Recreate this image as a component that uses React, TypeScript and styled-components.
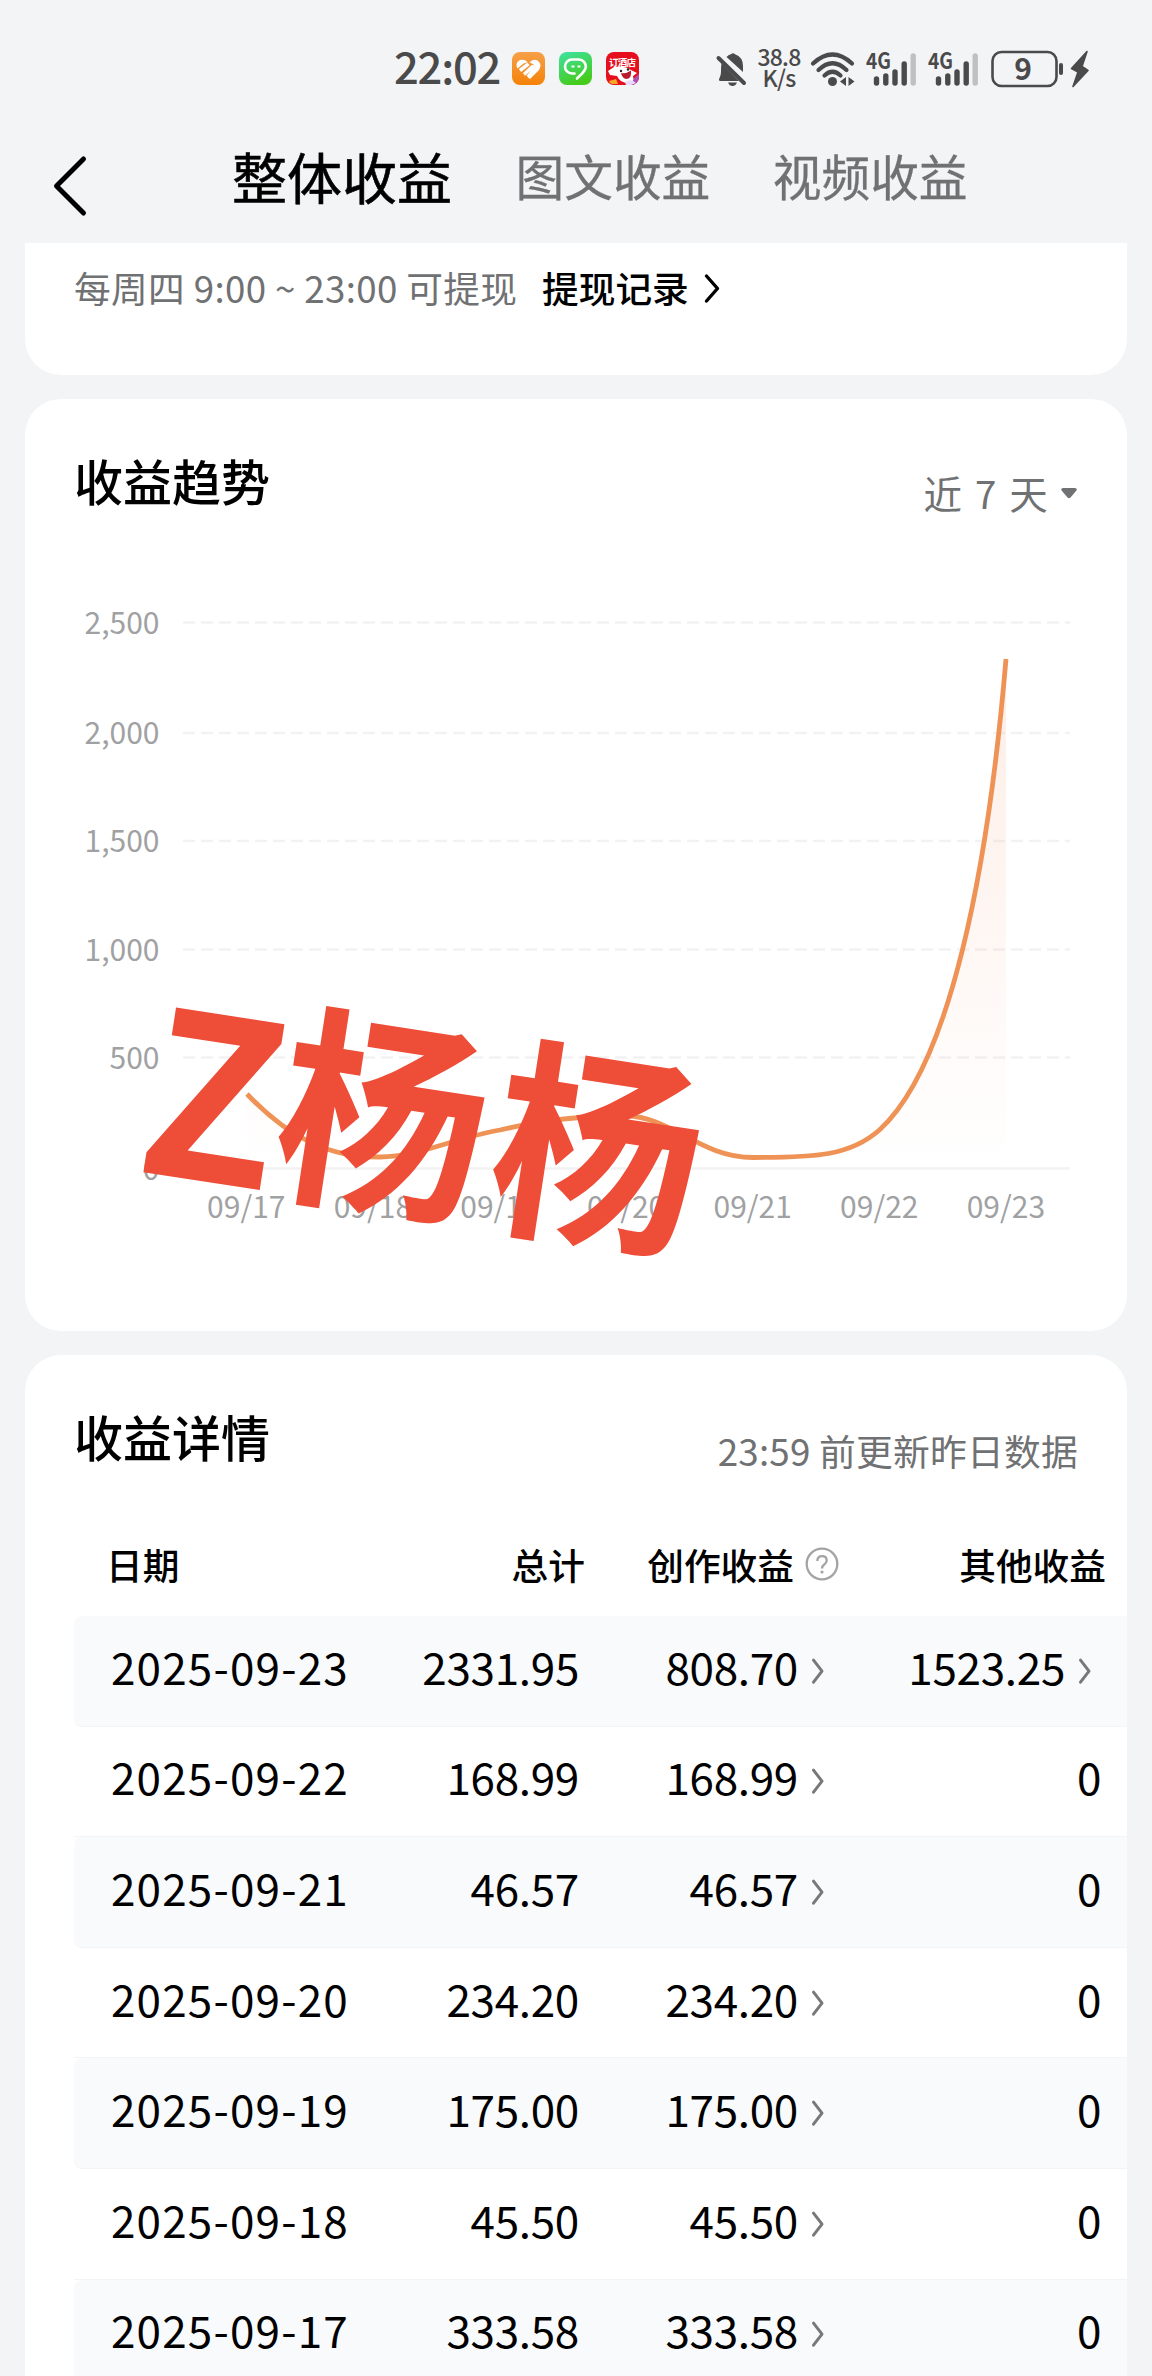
import React from 'react';
import styled, { createGlobalStyle } from 'styled-components';

const GlobalStyle = createGlobalStyle`
  *, *::before, *::after { box-sizing: border-box; }
  body {
    margin: 0;
    background: #f3f4f6;
    font-family: "Noto Sans CJK SC", "Noto Sans", sans-serif;
    color: #000;
  }
  svg { display: block; flex: none; overflow: visible; }
`;

const Screen = styled.div`
  width: 1152px;
  height: 2376px;
  overflow: hidden;
  display: flex;
  flex-direction: column;
`;

const StatusBar = styled.div`
  height: 137px;
  padding-left: 394px;
  display: flex;
  align-items: center;
  color: #4a4a4b;
  flex: none;
`;

const Clock = styled.span`
  width: 118px;
  font-size: 43.5px;
  line-height: 60px;
  letter-spacing: -1.2px;
  font-weight: 500;
  margin-top: -6px;
`;

const AppIcons = styled.div`
  display: flex;
  gap: 14px;
  width: 204px;
`;

const Speed = styled.div`
  width: 52px;
  margin: -3px 5px 0 5px;
  display: flex;
  flex-direction: column;
  align-items: center;
  font-size: 23px;
  line-height: 21.5px;
  letter-spacing: -0.8px;
  font-weight: 500;
`;

const Signals = styled.div`
  display: flex;
  gap: 10px;
  margin-left: 10px;
`;

const Battery = styled.div`
  display: flex;
  align-items: center;
  margin-left: 11px;
`;

const Header = styled.header`
  height: 106px;
  display: flex;
  align-items: flex-start;
  padding-left: 50px;
  flex: none;
`;

const BackIcon = styled.svg`
  margin-top: 14px;
`;

const Tabs = styled.nav`
  display: flex;
  margin-left: 142px;
  height: 76px;
  align-items: center;
`;

const Tab = styled.span<{ $active?: boolean }>`
  font-size: ${p => (p.$active ? 55 : 48.7)}px;
  color: ${p => (p.$active ? '#000' : '#707173')};
  -webkit-text-stroke: ${p => (p.$active ? 0.6 : 0.3)}px currentColor;
  line-height: 72px;
  margin-right: ${p => (p.$active ? 63.5 : 62.5)}px;
  white-space: nowrap;
`;

const Card = styled.section<{ $height?: number; $shape?: 'top' | 'bottom' }>`
  margin: ${p => (p.$shape === 'top' ? 0 : 24)}px 25px 0;
  background: #fff;
  border-radius: ${p =>
    p.$shape === 'top' ? '0 0 36px 36px' : p.$shape === 'bottom' ? '36px 36px 0 0' : '36px'};
  ${p => (p.$height ? `height: ${p.$height}px;` : 'flex: 1;')}
  flex-shrink: 0;
  overflow: hidden;
  position: relative;
`;

const WithdrawRow = styled.div`
  display: flex;
  align-items: center;
  padding: 19px 0 0 49px;
  font-size: 36.7px;
  line-height: 50px;
  color: #707173;
  white-space: nowrap;
`;

const WithdrawTime = styled.span`
  width: 468px;
  letter-spacing: 0.35px;
`;

const RecordLink = styled.span`
  font-weight: 500;
  color: #000;
  margin-right: 15px;
`;

const CardHead = styled.div`
  display: flex;
  justify-content: space-between;
  padding: 46px 49px 0 49px;
`;

const Title = styled.h2`
  margin: 0;
  font-size: 49px;
  line-height: 70px;
  font-weight: 500;
`;

const HeadNote = styled.div<{ $size: number; $gap?: number }>`
  display: flex;
  align-items: center;
  height: 50px;
  margin-top: ${p => (p.$gap ? 22 : 24)}px;
  gap: ${p => p.$gap ?? 0}px;
  font-size: ${p => p.$size}px;
  line-height: 50px;
  letter-spacing: 0.2px;
  word-spacing: ${p => (p.$gap ? 4 : 0)}px;
  color: #707173;
`;

const ChartSvg = styled.svg`
  margin-top: 44px;
`;

const Watermark = styled.div`
  position: absolute;
  left: 125px;
  top: 514px;
  font-size: 210px;
  line-height: 300px;
  letter-spacing: 7px;
  font-weight: 700;
  color: #ee4d38;
  white-space: nowrap;
  transform: rotate(8.7deg) scaleY(1.02);
  transform-origin: 0 50%;
`;

const WatermarkInitial = styled.span`
  position: relative;
  top: 10px;
  font-size: 222px;
  letter-spacing: -3px;
`;

const Table = styled.div`
  margin: 36px 0 0 49px;
`;

const Row = styled.div<{ $shaded?: boolean }>`
  display: grid;
  grid-template-columns: 266px 246px 254px 267px;
  align-items: center;
  height: 110.6px;
  padding-bottom: 10px;
  font-size: 44px;
  letter-spacing: -0.3px;
  background: ${p => (p.$shaded ? '#f8fafc' : '#fff')};
  border-bottom: 1px solid #f3f4f6;
  border-radius: ${p => (p.$shaded ? '8px 0 0 8px' : '0')};
`;

const HeadRow = styled(Row)`
  height: 105px;
  padding-bottom: 0;
  border-bottom: 0;
  font-size: 36.7px;
  letter-spacing: 0;
  font-weight: 500;
`;

const Cell = styled.div<{ $end?: number; $start?: number; $gap?: number }>`
  display: flex;
  align-items: center;
  justify-content: ${p => (p.$start ? 'flex-start' : 'flex-end')};
  padding-left: ${p => p.$start ?? 0}px;
  padding-right: ${p => p.$end ?? 0}px;
  gap: ${p => p.$gap ?? 14}px;
  line-height: 64px;
  white-space: nowrap;
`;

const DateText = styled.span`
  letter-spacing: 1.2px;
`;

const Chevron = () => (
  <svg width="13" height="28" viewBox="0 0 13 28">
    <path d="M1.500 8.200 L10 19.200 L1.500 30.200" fill="none" stroke="#77787a" strokeWidth="3" strokeLinecap="round" strokeLinejoin="round" />
  </svg>
);

const Signal = () => (
  <svg width="52" height="36" viewBox="0 0 52 36">
    <text x="0" y="17.500" fontSize="22.500" fontWeight="700" fill="#4a4a4b" textLength="25" lengthAdjust="spacingAndGlyphs">4G</text>
    <g stroke="#4a4a4b" strokeWidth="5.400" strokeLinecap="round">
      <path d="M10.500 28V32" />
      <path d="M19.800 25V32" />
      <path d="M29 21V32" />
      <path d="M38.200 13V32" />
      <path d="M47.200 5V32" stroke="#bfc0c2" />
    </g>
  </svg>
);

const rows: [string, string, string, string][] = [
  ['2025-09-23', '2331.95', '808.70', '1523.25'],
  ['2025-09-22', '168.99', '168.99', '0'],
  ['2025-09-21', '46.57', '46.57', '0'],
  ['2025-09-20', '234.20', '234.20', '0'],
  ['2025-09-19', '175.00', '175.00', '0'],
  ['2025-09-18', '45.50', '45.50', '0'],
  ['2025-09-17', '333.58', '333.58', '0'],
];

const yTicks: [string, number][] = [
  ['2,500', 621.5],
  ['2,000', 732],
  ['1,500', 840],
  ['1,000', 948.5],
  ['500', 1056.5],
  ['0', 1167.5],
];

const days = ['09/17', '09/18', '09/19', '09/20', '09/21', '09/22', '09/23'];

const curve =
  'M247 1093 C290 1138 330 1156.5 380 1156 C420 1155.5 450 1138 500 1129 C530 1122 565 1115 626.6 1115 C670 1115 700 1156.5 753 1156.5 C815 1156.5 850 1155 879.4 1129 C950 1065 988 870 1006 658';

const TrendChart = () => (
  <ChartSvg width="1102" height="700" viewBox="25 560 1102 700">
    <defs>
      <linearGradient id="area" x1="0" y1="658" x2="0" y2="1167" gradientUnits="userSpaceOnUse">
        <stop offset="0" stopColor="#f58a5a" stopOpacity="0.15" />
        <stop offset="1" stopColor="#f58a5a" stopOpacity="0" />
      </linearGradient>
    </defs>
    {yTicks.map(([label, y]) => (
      <g key={label}>
        <path
          d={`M183 ${y}H1070`}
          stroke="#f2f2f3"
          strokeWidth="2.6"
          strokeDasharray={label === '0' ? undefined : '12 6'}
        />
        <text x="159.5" y={y + 11} textAnchor="end" fontSize="30" fill="#a0a1a3">{label}</text>
      </g>
    ))}
    {days.map((d, i) => (
      <text key={d} x={246.3 + i * 126.6} y="1216.5" textAnchor="middle" fontSize="30" fill="#a0a1a3">{d}</text>
    ))}
    <path d={`${curve} V1167 H247Z`} fill="url(#area)" />
    <path d={curve} fill="none" stroke="#ef9256" strokeWidth="4.8" />
  </ChartSvg>
);

export default function App() {
  return (
    <Screen>
      <GlobalStyle />
      <StatusBar>
        <Clock>22:02</Clock>
        <AppIcons>
          <svg width="33" height="33" viewBox="0 0 33 33">
            <defs>
              <linearGradient id="orange" x1="0" y1="0" x2="0" y2="1">
                <stop offset="0" stopColor="#f6a04a" />
                <stop offset="1" stopColor="#f58207" />
              </linearGradient>
            </defs>
            <rect width="33" height="33" rx="8" fill="url(#orange)" />
            <path d="M15.500 10.300 C12 6 4.500 7.500 4.500 13.500 Q4.500 15 5.500 16.500 L11.500 11.500 Z" fill="#fff" />
            <path d="M8 18.500 L16.500 11.800 M12 22.500 L19.500 15.500 Q22 13.500 22.500 17 L16 25" fill="none" stroke="#fff" strokeWidth="3.600" />
            <path d="M17.500 10.500 Q21 6.500 25.500 8.500 Q30.500 12 27 18 L18 27 L15.500 25 L23.500 16.500 Q23 12 17.500 10.500Z" fill="#fff" />
          </svg>
          <svg width="33" height="33" viewBox="0 0 33 33">
            <defs>
              <linearGradient id="green" x1="0" y1="0" x2="0.4" y2="1">
                <stop offset="0" stopColor="#3de3a4" />
                <stop offset="1" stopColor="#45cb1c" />
              </linearGradient>
            </defs>
            <rect width="33" height="33" rx="8" fill="url(#green)" />
            <path d="M15.500 21.500 H13 A7 7 0 0 1 13 7.500 H20 A7 7 0 0 1 26.800 15 C26 20 22 22.500 18 26.500" fill="none" stroke="#fff" strokeWidth="2.600" strokeLinecap="round" />
            <path d="M12.500 14.500 H15.500 M18.500 14.500 H21.500" stroke="#fff" strokeWidth="2" />
          </svg>
          <svg width="33" height="33" viewBox="0 0 33 33">
            <rect width="33" height="33" rx="8" fill="#e60f1d" />
            <path d="M20 33 L33 22 V25 A8 8 0 0 1 25 33Z" fill="#b04fb0" />
            <path d="M2 19 L8 15 Q18 13 25 18 L31 21 L27 24 Q29 31 22 31 Q14 31 11 24 L4 23 Z" fill="#fff" />
            <path d="M15 21 Q20 22 25 18.500 Q26 27 20 27 Q16 26 15 21Z" fill="#b91c2c" />
            <circle cx="15" cy="19" r="1.200" fill="#222" />
            <circle cx="22" cy="17.500" r="1.200" fill="#222" />
            <path d="M3 29 L10 27 L12 32 H6 Q3 31 3 29Z" fill="#f5a623" />
            <path d="M19 30 Q25 26 30 31 L25 33 H20Z" fill="#e9d9ff" />
            <text x="3" y="14" fontSize="9.500" fontWeight="700" fill="#fff" textLength="27">订酒店</text>
          </svg>
        </AppIcons>
        <svg width="32" height="38" viewBox="0 0 32 38">
          <path d="M3.500 28 Q2 31 4.500 31 H23 L5.500 13 Q5 16 5 22 Q5 25 3.500 28Z M10.500 7 Q13 4.500 15 4.200 Q17 2.500 19 4.200 Q27 7 27 16 V22 Z M12 32.500 H21 Q19.500 36 16.500 36 Q13.500 36 12 32.500Z" fill="#4a4a4b" />
          <path d="M2.500 8 L28 33" stroke="#4a4a4b" strokeWidth="4" strokeLinecap="round" />
        </svg>
        <Speed>
          <span>38.8</span>
          <span>K/s</span>
        </Speed>
        <svg width="46" height="38" viewBox="0 0 46 38">
          <g fill="none" stroke="#4a4a4b" strokeWidth="4.200" strokeLinecap="round">
            <path d="M3 13.500 Q22.500 -4.500 42 13.500" />
            <path d="M8.500 20 Q22.500 6.500 36.500 20" />
            <path d="M14.500 25.500 Q22.500 18 30.500 25.500" />
          </g>
          <circle cx="22.500" cy="31.500" r="4.500" fill="#4a4a4b" />
          <path d="M36 27 V36 L30 31.500Z M38.500 27 V36 L44.500 31.500Z" fill="#4a4a4b" />
        </svg>
        <Signals>
          <Signal />
          <Signal />
        </Signals>
        <Battery>
          <svg width="100" height="40" viewBox="0 0 100 40">
            <rect x="1.500" y="3" width="64" height="34" rx="9" fill="none" stroke="#4a4a4b" strokeWidth="2.600" />
            <text x="32" y="31" textAnchor="middle" fontSize="30" fontWeight="700" fill="#4a4a4b">9</text>
            <path d="M70 16 V24" stroke="#4a4a4b" strokeWidth="4" strokeLinecap="round" />
            <path d="M96 2.500 L80.500 19.500 L87 23 L82 37.500 L97 21.500 L91 17.500Z" fill="#4a4a4b" stroke="#4a4a4b" strokeWidth="1.600" strokeLinejoin="round" />
          </svg>
        </Battery>
      </StatusBar>

      <Header>
        <BackIcon width="40" height="70" viewBox="0 0 40 70">
          <path d="M33.500 8 L6.500 35 L33.500 62" fill="none" stroke="#000" strokeWidth="5" strokeLinecap="round" strokeLinejoin="round" />
        </BackIcon>
        <Tabs>
          <Tab $active>整体收益</Tab>
          <Tab>图文收益</Tab>
          <Tab>视频收益</Tab>
        </Tabs>
      </Header>

      <Card $shape="top" $height={132}>
        <WithdrawRow>
          <WithdrawTime>每周四 9:00 ~ 23:00 可提现</WithdrawTime>
          <RecordLink>提现记录</RecordLink>
          <svg width="18" height="34" viewBox="0 0 18 34">
            <path d="M2.500 6 L13.500 18.500 L2.500 31" fill="none" stroke="#000" strokeWidth="3.400" strokeLinecap="round" strokeLinejoin="round" />
          </svg>
        </WithdrawRow>
      </Card>

      <Card $height={932}>
        <CardHead>
          <Title>收益趋势</Title>
          <HeadNote $size={38.5} $gap={12}>
            <span>近 7 天</span>
            <svg width="18" height="16" viewBox="0 0 18 16">
              <path d="M3 4 H15 Q18 4.500 16 7 L10.500 13.500 Q9 15 7.500 13.500 L2 7 Q0 4.500 3 4Z" fill="#707173" />
            </svg>
          </HeadNote>
        </CardHead>
        <TrendChart />
        <Watermark><WatermarkInitial>Z</WatermarkInitial>杨杨</Watermark>
      </Card>

      <Card $shape="bottom">
        <CardHead>
          <Title>收益详情</Title>
          <HeadNote $size={36.8}>23:59 前更新昨日数据</HeadNote>
        </CardHead>
        <Table>
          <HeadRow>
            <Cell $start={32}>日期</Cell>
            <Cell $end={1}>总计</Cell>
            <Cell $gap={11} $end={1}>
              创作收益
              <svg width="34" height="34" viewBox="0 0 34 34">
                <circle cx="17" cy="17" r="15.300" fill="none" stroke="#a3a4a6" strokeWidth="2.300" />
                <path d="M12.300 14 Q12.500 9.200 17 9.200 Q21.700 9.200 21.700 13.500 Q21.700 15.800 19 17.700 Q17 19 17 21.500" fill="none" stroke="#a3a4a6" strokeWidth="2.300" />
                <circle cx="17" cy="25" r="1.600" fill="#a3a4a6" />
              </svg>
            </Cell>
            <Cell $end={1}>其他收益</Cell>
          </HeadRow>
          {rows.map(([date, total, created, other], i) => (
            <Row key={date} $shaded={i % 2 === 0}>
              <Cell $start={37}><DateText>{date}</DateText></Cell>
              <Cell $end={7}>{total}</Cell>
              <Cell $end={15}>
                {created}
                <Chevron />
              </Cell>
              <Cell $end={other === '0' ? 6 : 15}>
                {other}
                {other !== '0' && <Chevron />}
              </Cell>
            </Row>
          ))}
        </Table>
      </Card>
    </Screen>
  );
}
